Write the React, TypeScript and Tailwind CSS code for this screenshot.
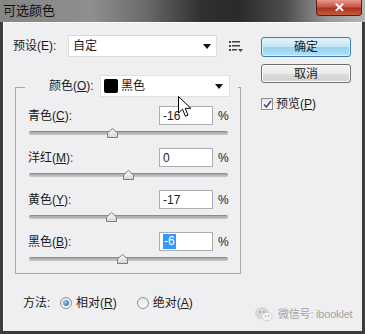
import React from 'react';

const rows = [
  { label: '青色', key: 'C', value: -16 },
  { label: '洋红', key: 'M', value: 0 },
  { label: '黄色', key: 'Y', value: -17 },
  { label: '黑色', key: 'B', value: -6, selected: true },
];

function Caret() {
  return (
    <svg width="8" height="5" viewBox="0 0 8 5">
      <path d="M0 0h8L4 5z" fill="#111" />
    </svg>
  );
}

function Thumb() {
  return (
    <svg width="11" height="10" viewBox="0 0 11 10">
      <defs>
        <linearGradient id="tg" x1="0" y1="0" x2="0" y2="1">
          <stop offset="0" stopColor="#fafafa" />
          <stop offset="1" stopColor="#d6d6d6" />
        </linearGradient>
      </defs>
      <path d="M5.5 0.5L10.5 5v4.5h-10V5z" fill="url(#tg)" stroke="#7d7d7d" />
    </svg>
  );
}

function SliderRow({ label, k, value, selected }: { label: string; k: string; value: number; selected?: boolean }) {
  return (
    <div className="flex flex-col">
      <div className="flex h-[19px] items-center">
        <span className="w-[143px] pl-[12px] text-[12px] text-[#1a1a1a]">
          {label}(<u>{k}</u>):
        </span>
        <div className="flex h-[19px] w-[54px] items-center border border-[#abadb3] bg-white pl-[3px] text-[12px] text-[#1a1a1a]">
          {selected ? <span className="bg-[#3399ff] px-px leading-[15px] text-white">{value}</span> : <span>{value}</span>}
        </div>
        <span className="ml-[5px] text-[12px] text-[#1a1a1a]">%</span>
      </div>
      <div className="relative ml-[13px] h-[23px] w-[199px]">
        <div className="mt-[6px] h-[4px] w-full rounded-[2px] border-t border-[#8c8c8c] bg-[linear-gradient(#a9a9a9,#c9c9c9)]" />
        <div className="absolute top-[3px]" style={{ left: 99.5 + value * 0.99 - 5.5 }}>
          <Thumb />
        </div>
      </div>
    </div>
  );
}

function Radio({ checked }: { checked?: boolean }) {
  return (
    <span className="flex h-[12px] w-[12px] items-center justify-center rounded-full border border-[#8e8f8f] bg-[linear-gradient(#e6e6e6,#fbfbfb)]">
      {checked && (
        <span className="h-[6px] w-[6px] rounded-full bg-[radial-gradient(circle_at_35%_35%,#8fd0f5,#1c5a8c)]" />
      )}
    </span>
  );
}

export default function App() {
  return (
    <div className="relative flex h-[334px] w-[365px] flex-col overflow-hidden bg-[#3d3d3d] font-['Liberation_Sans','Noto_Sans_CJK_SC',sans-serif]">
      {/* title bar */}
      <div className="flex h-[22px] items-start justify-between bg-[linear-gradient(90deg,#868686_0%,#8e8e8e_25%,#6a6a6a_40%,#303030_55%,#2a2a2a_65%,#4c4c4c_78%,#9a9a9a_90%,#b4b4b4_100%)] pr-[3px]">
        <span className="pl-[3px] pt-[2px] text-[13px] leading-[18px] text-[#111]">可选颜色</span>
        <div className="flex h-[16px] w-[46px] items-center justify-center rounded-b-[4px] border border-t-0 border-[#5b1e17] bg-[linear-gradient(#e59a8c,#c9553f_45%,#a8321d_55%,#c65a3c)]">
          <span className="text-[13px] font-bold leading-none text-white">✕</span>
        </div>
      </div>

      {/* body */}
      <div className="mx-[3px] mb-[3px] flex flex-1 border-l border-t border-[#fbfbfb] bg-[#efeff1]">
        <div className="flex w-[257px] flex-col pl-[9px] pt-[12px]">
          <div className="flex h-[22px] items-center">
            <span className="w-[55px] text-[12px] text-[#1a1a1a]">预设(E):</span>
            <div className="flex h-[22px] w-[149px] items-center justify-between border border-[#dcdcdc] bg-white pl-[4px] pr-[5px] text-[12px] text-[#1a1a1a]">
              <span>自定</span>
              <Caret />
            </div>
            <svg className="ml-[12px]" width="14" height="11" viewBox="0 0 14 11">
              <g fill="#444">
                <rect x="0" y="0" width="2" height="2" />
                <rect x="3" y="0" width="8" height="1.5" />
                <rect x="0" y="4" width="2" height="2" />
                <rect x="3" y="4" width="8" height="1.5" />
                <rect x="0" y="8" width="2" height="2" />
                <rect x="3" y="8" width="5" height="1.5" />
                <path d="M9 8h5l-2.5 3z" />
              </g>
            </svg>
          </div>

          {/* group box */}
          <div className="ml-[2px] mt-[30px] flex h-[187px] w-[226px] flex-col border border-[#a7a7a7]">
            <div className="-mt-[13px] ml-[9px] flex h-[22px] w-[213px] items-center bg-[#efeff1] pr-[8px]">
              <span className="w-[75px] pl-[24px] text-[12px] text-[#1a1a1a]">
                颜色(<u>O</u>):
              </span>
              <div className="flex h-[22px] w-[130px] items-center justify-between border border-[#e0e0e0] bg-white pl-[3px] pr-[6px] text-[12px] text-[#1a1a1a]">
                <span className="flex items-center gap-[3px]">
                  <span className="h-[14px] w-[14px] rounded-[2px] bg-black" />
                  黑色
                </span>
                <Caret />
              </div>
            </div>
            <div className="mt-[9px] flex flex-col">
              {rows.map((r) => (
                <SliderRow key={r.key} label={r.label} k={r.key} value={r.value} selected={r.selected} />
              ))}
            </div>
          </div>

          <div className="ml-[10px] mt-[21px] flex h-[16px] items-center text-[12px] text-[#1a1a1a]">
            <span className="w-[37px]">方法:</span>
            <Radio checked />
            <span className="ml-[4px]">
              相对(<u>R</u>)
            </span>
            <span className="ml-[20px]">
              <Radio />
            </span>
            <span className="ml-[4px]">
              绝对(<u>A</u>)
            </span>
          </div>
        </div>

        {/* right column */}
        <div className="flex w-[90px] flex-col pt-[14px]">
          <div className="flex h-[20px] items-center justify-center rounded-[3px] border border-[#3c7fb1] bg-[linear-gradient(#e5f4fc,#c4e5f6_50%,#98d1ef_51%,#b6e0f4)] text-[12px] text-[#1a1a1a] shadow-[inset_0_0_0_1px_#d8f0fb]">
            确定
          </div>
          <div className="mt-[7px] flex h-[19px] items-center justify-center rounded-[3px] border border-[#707070] bg-[linear-gradient(#f2f2f2,#ebebeb_50%,#dddddd_51%,#cfcfcf)] text-[12px] text-[#1a1a1a] shadow-[inset_0_0_0_1px_#fcfcfc]">
            取消
          </div>
          <div className="mt-[13px] flex h-[16px] items-center text-[12px] text-[#1a1a1a]">
            <span className="flex h-[12px] w-[12px] items-center justify-center border border-[#8f8f8f] bg-[linear-gradient(#e8e8e8,#ffffff)]">
              <svg width="9" height="9" viewBox="0 0 9 9">
                <path d="M1 4.5l2.3 2.6L8 1" fill="none" stroke="#3a4f7a" strokeWidth="1.6" />
              </svg>
            </span>
            <span className="ml-[3px]">
              预览(<u>P</u>)
            </span>
          </div>
        </div>
      </div>

      {/* watermark */}
      <div className="absolute left-[255px] top-[306px] flex items-center gap-[5px] text-[11px] tracking-[-0.2px] text-[#a3a3a3]">
        <svg width="18" height="15" viewBox="0 0 18 15">
          <ellipse cx="7" cy="6" rx="6.5" ry="5.3" fill="#d9d9d9" stroke="#bdbdbd" strokeWidth="0.6" />
          <path d="M3 10l-1 3 3-2z" fill="#d9d9d9" />
          <ellipse cx="12" cy="9.5" rx="5.3" ry="4.3" fill="#f4f4f4" stroke="#bdbdbd" strokeWidth="0.6" />
          <circle cx="5" cy="5" r="0.9" fill="#9a9a9a" />
          <circle cx="9" cy="5" r="0.9" fill="#9a9a9a" />
          <circle cx="10.5" cy="9" r="0.7" fill="#9a9a9a" />
          <circle cx="13.5" cy="9" r="0.7" fill="#9a9a9a" />
        </svg>
        <span>微信号: ibooklet</span>
      </div>

      {/* mouse cursor */}
      <svg className="absolute left-[178px] top-[96px]" width="14" height="22" viewBox="0 0 14 22">
        <path d="M0.5 0.5V17L4.5 13.2L7.4 20.2L10 19.1L7.2 12.3H12.8Z" fill="#fff" stroke="#000" strokeWidth="1" strokeLinejoin="round" />
      </svg>
    </div>
  );
}
